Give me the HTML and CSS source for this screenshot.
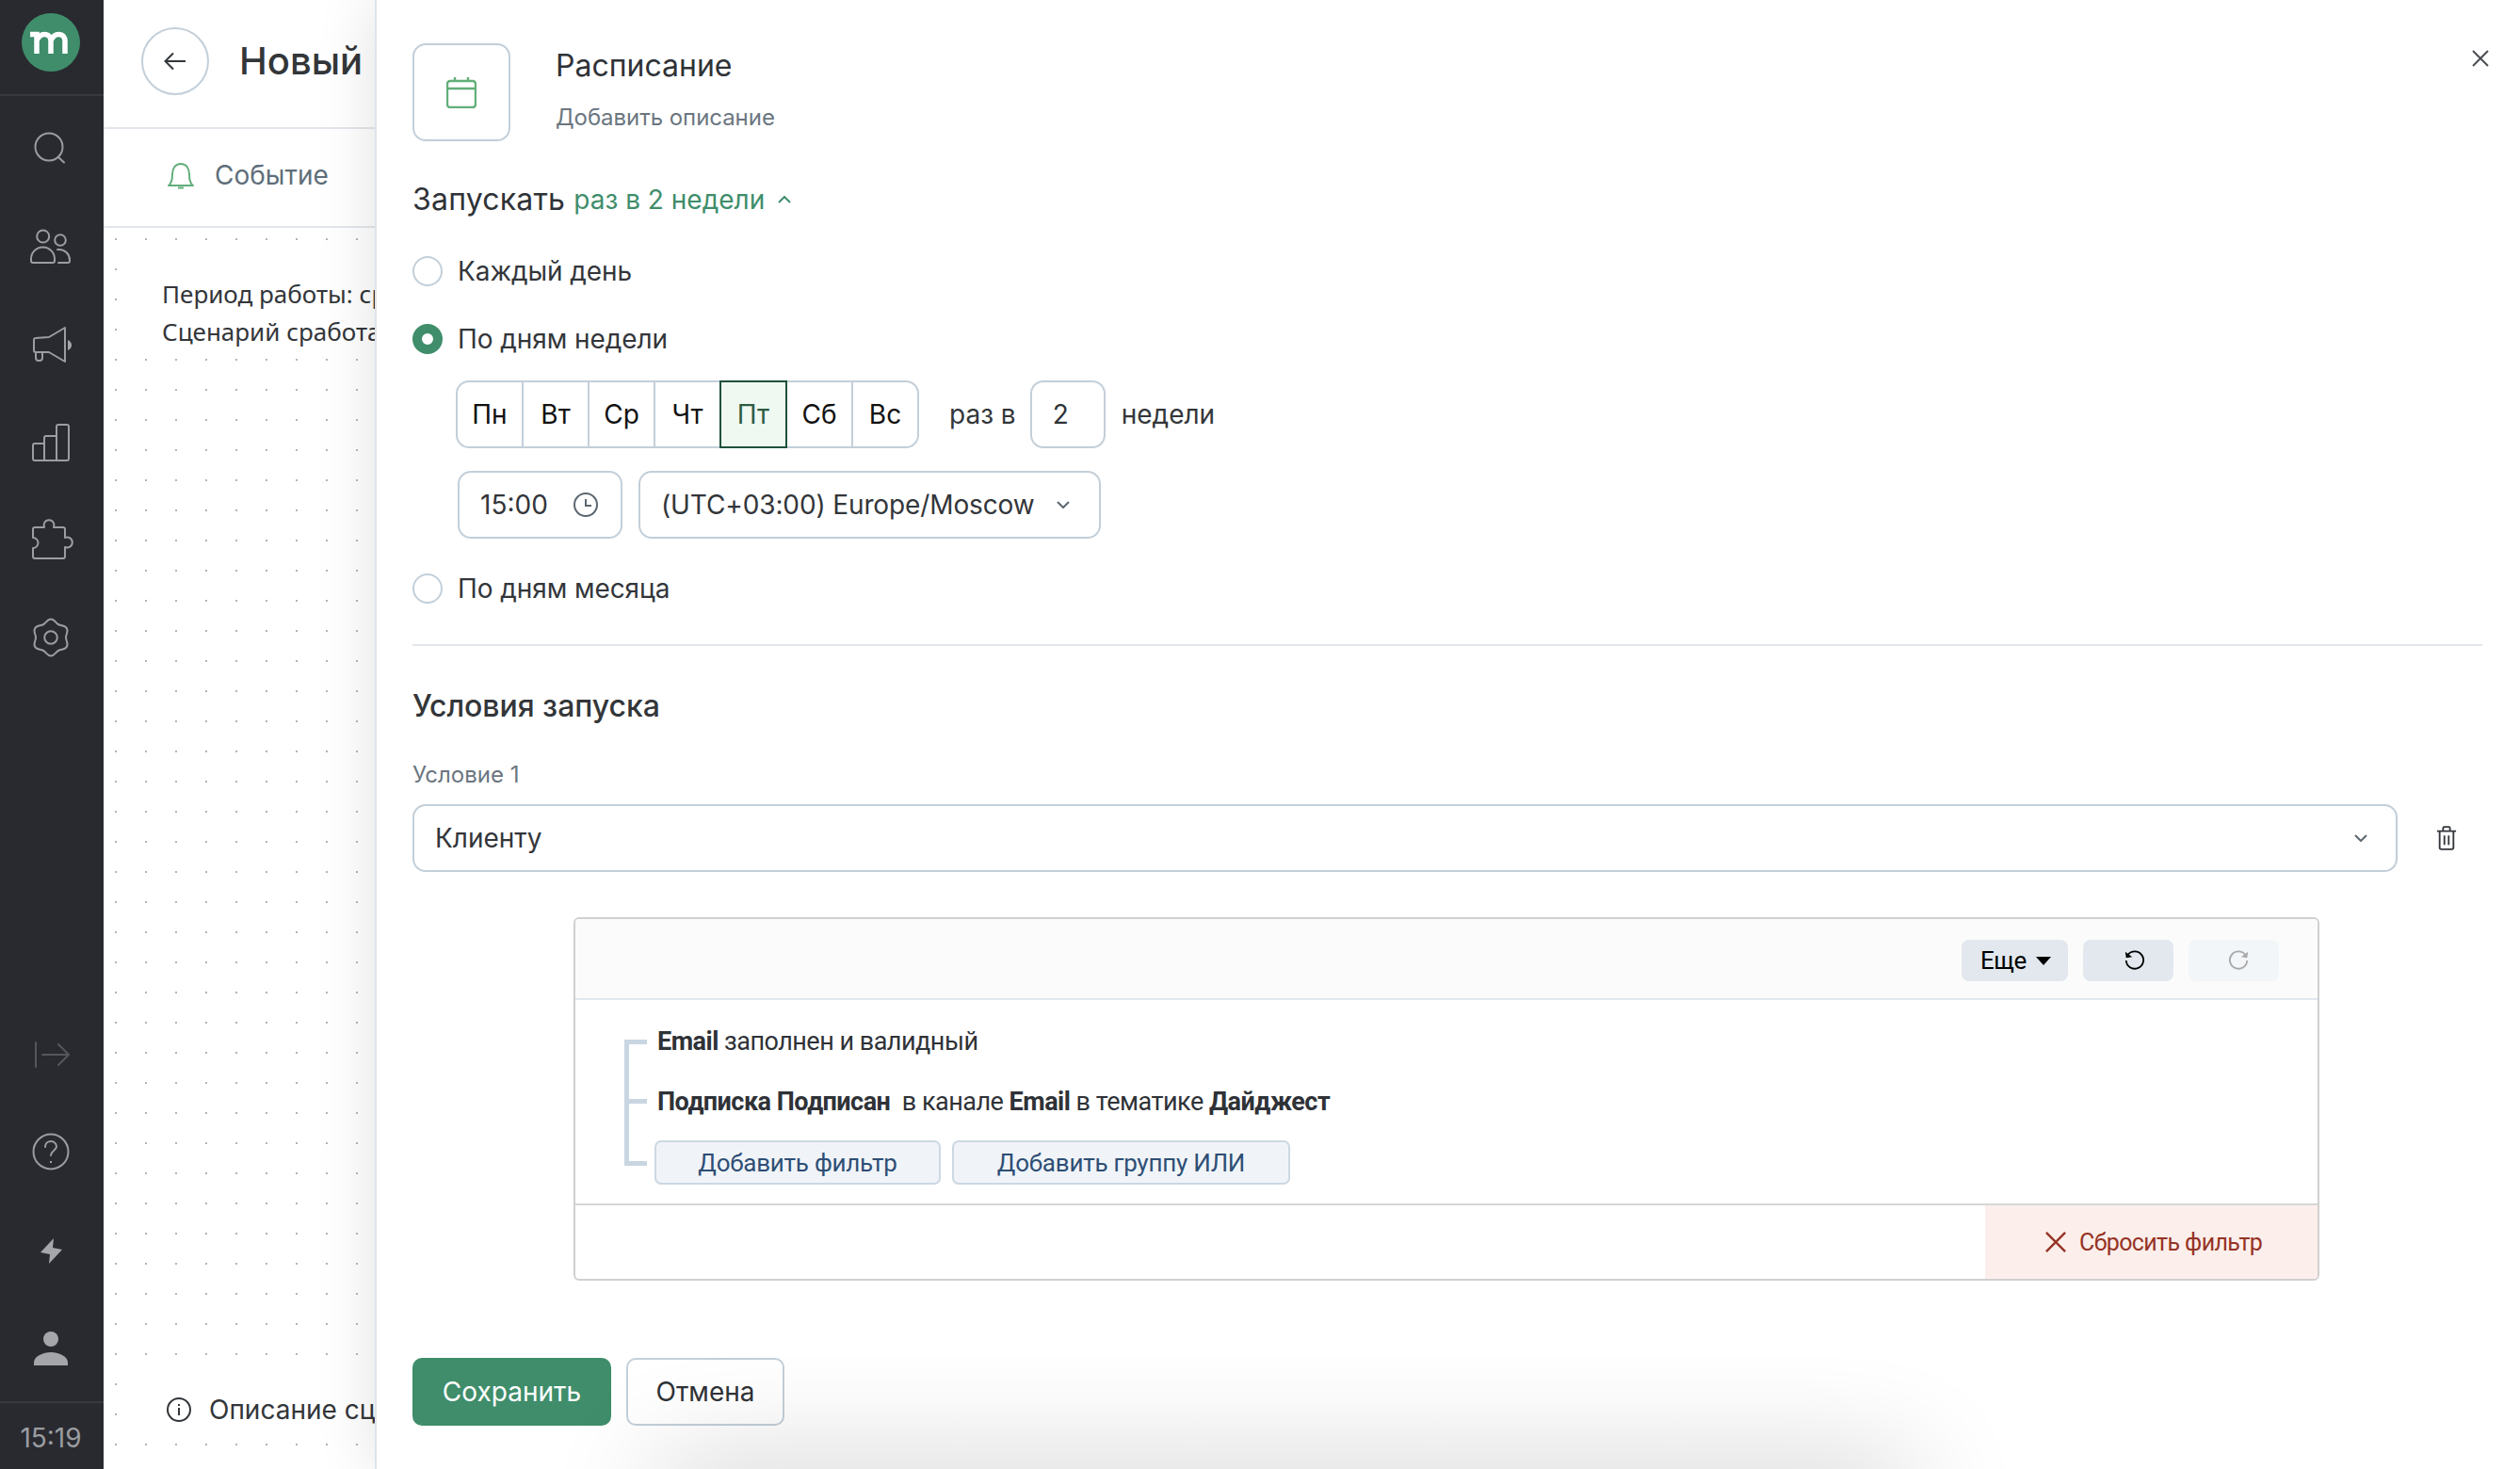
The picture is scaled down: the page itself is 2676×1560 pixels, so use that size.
FILE: index.html
```html
<!DOCTYPE html>
<html lang="ru">
<head>
<meta charset="utf-8">
<title>Расписание</title>
<link rel="stylesheet" href="styles.css">
</head>
<body>
<aside class="sidebar">
  <div class="logo-row">
    <svg class="logo" viewBox="23 14 62 62"><circle cx="54" cy="45" r="31" fill="#3f8d6b"/><path d="M32 36.500h7v20.500M39 43c2-4 5-6.500 8-6.500 5 0 7 3 7 7v13.500M54 43c2-4 5-6.500 8-6.500 5 0 7 3 7 7v13.500" fill="none" stroke="#fff" stroke-width="5.500"/></svg>
  </div>
  <nav class="nav">
    <div class="nav-item"><svg class="nav-icon" viewBox="26 129 56 56"><circle cx="52" cy="156" r="14.5"/><path d="M62 167l6 5.500"/></svg></div>
    <div class="nav-item"><svg class="nav-icon" viewBox="26 233 56 56"><circle cx="45.700" cy="251" r="6.500"/><circle cx="64" cy="255" r="5.800"/><path d="M35 279h21a2 2 0 0 0 2-2v-2a12.500 12.500 0 0 0-25 0v2a2 2 0 0 0 2 2zM61 265h2a11 11 0 0 1 11 11v1a2 2 0 0 1-2 2H62"/></svg></div>
    <div class="nav-item"><svg class="nav-icon" viewBox="26 337 56 56"><path d="M36 361a2 2 0 0 1 2-2l14-1 17-10v36l-17-10H38a2 2 0 0 1-2-2zM38 374v6a3 3 0 0 0 3 3h1a3 3 0 0 0 3-3v-6"/><path class="solid" d="M72 361q4 2 4 5.500t-4 5.500z"/></svg></div>
    <div class="nav-item"><svg class="nav-icon" viewBox="26 441 56 56"><path d="M47 471h-10a2 2 0 0 0-2 2v14a2 2 0 0 0 2 2h34a2 2 0 0 0 2-2v-34a2 2 0 0 0-2-2h-9a2 2 0 0 0-2 2v36M47 489v-24a2 2 0 0 1 2-2h11"/></svg></div>
    <div class="nav-item"><svg class="nav-icon" viewBox="26 545 56 56"><path d="M37 560h10a5.500 5.500 0 1 1 10 0h10a2 2 0 0 1 2 2v9a5.500 5.500 0 1 1 0 10v10a2 2 0 0 1-2 2H37a2 2 0 0 1-2-2v-9a5.500 5.500 0 1 0 0-11v-9a2 2 0 0 1 2-2z"/></svg></div>
    <div class="nav-item"><svg class="nav-icon" viewBox="-28 -28 56 56"><g><path d="M-8-13.860C-5-15.600-4-19.500 0-19.500S5-15.600 8-13.860"/><path transform="rotate(60)" d="M-8-13.860C-5-15.600-4-19.500 0-19.500S5-15.600 8-13.860"/><path transform="rotate(120)" d="M-8-13.860C-5-15.600-4-19.500 0-19.500S5-15.600 8-13.860"/><path transform="rotate(180)" d="M-8-13.860C-5-15.600-4-19.500 0-19.500S5-15.600 8-13.860"/><path transform="rotate(240)" d="M-8-13.860C-5-15.600-4-19.500 0-19.500S5-15.600 8-13.860"/><path transform="rotate(300)" d="M-8-13.860C-5-15.600-4-19.500 0-19.500S5-15.600 8-13.860"/></g><circle r="6.800"/></svg></div>
  </nav>
  <nav class="nav nav-bottom">
    <div class="nav-item"><svg class="nav-icon nav-icon-dim" viewBox="26 1091 56 56"><path d="M38 1107v26M45 1120h28M62 1109l11 11-11 11"/></svg></div>
    <div class="nav-item"><svg class="nav-icon" viewBox="26 1195 56 56"><circle cx="54" cy="1223" r="18.500"/><path d="M48 1218c0-4 3-6 6-6 4 0 6 3 6 5.500 0 4-6 4.500-6 9.500"/><path class="solid" d="M53 1233h2v2h-2z"/></svg></div>
    <div class="nav-item"><svg class="nav-icon" viewBox="26 1299 56 56"><path class="solid" d="M57 1315l-14 15 10 2-1 10 14-15-10-2z"/></svg></div>
    <div class="nav-item"><svg class="nav-icon" viewBox="26 1403 56 56"><circle class="solid" cx="54" cy="1422" r="8"/><path class="solid" d="M36 1450v-3c0-7 10-11 18-11s18 4 18 11v3z"/></svg></div>
  </nav>
  <div class="clock">15:19</div>
</aside>

<section class="canvas">
  <header class="canvas-head">
    <span class="back"><svg class="back-icon" viewBox="0 0 24 24"><path d="M23 12H2M10 3.500 1.500 12l8.500 8.500"/></svg></span>
    <h1 class="canvas-title">Новый сценарий</h1>
  </header>
  <div class="canvas-event">
    <svg class="bell" viewBox="0 0 28 30"><path d="M1 26h26c-3-2-4-6-4-12 0-6-3-11-9-11S5 8 5 14c0 6-1 10-4 12zM11 28.500h6"/></svg>
    <span>Событие</span>
  </div>
  <div class="canvas-body">
    <div class="period">
      <p class="period-line">Период работы: среда</p>
      <p class="period-line">Сценарий сработает</p>
    </div>
    <div class="describe">
      <svg class="info" viewBox="0 0 26 26"><circle cx="13" cy="13" r="12"/><path d="M13 11v8M13 7v2"/></svg>
      <span>Описание сценария</span>
    </div>
  </div>
</section>

<main class="drawer">
  <svg class="close" viewBox="0 0 18 18"><path d="M1 1l16 16M17 1 1 17"/></svg>
  <div class="head">
    <div class="head-icon"><svg class="calendar" viewBox="0 0 32 34"><rect x="1" y="5" width="30" height="28" rx="3"/><path d="M1 13h30M9 1v4M23 1v4"/></svg></div>
    <div class="head-text">
      <div class="head-title">Расписание</div>
      <div class="head-sub">Добавить описание</div>
    </div>
  </div>

  <div class="run"><span class="run-label">Запускать </span><span class="run-value">раз в 2 недели</span><svg class="chev-up" viewBox="0 0 14 8"><path d="M1 7l6-6 6 6"/></svg></div>

  <label class="radio radio-first"><span class="dot"></span>Каждый день</label>
  <label class="radio radio-next"><span class="dot dot-on"></span>По дням недели</label>

  <div class="days-row">
    <div class="days">
      <span class="day">Пн</span><span class="day">Вт</span><span class="day">Ср</span><span class="day">Чт</span><span class="day day-on">Пт</span><span class="day">Сб</span><span class="day">Вс</span>
    </div>
    <span class="muted-text every">раз в</span>
    <span class="num">2</span>
    <span class="muted-text weeks">недели</span>
  </div>

  <div class="time-row">
    <div class="field time">15:00<svg class="clock-icon" viewBox="0 0 26 26"><circle cx="13" cy="13" r="12"/><path d="M13 7v7h6"/></svg></div>
    <div class="field zone">(UTC+03:00) Europe/Moscow<svg class="chev" viewBox="0 0 14 8"><path d="M1 1l6 6 6-6"/></svg></div>
  </div>

  <label class="radio radio-last"><span class="dot"></span>По дням месяца</label>

  <hr class="rule">

  <h2 class="cond-title">Условия запуска</h2>
  <div class="cond-label">Условие 1</div>
  <div class="cond-row">
    <div class="field cond-select">Клиенту<svg class="chev" viewBox="0 0 14 8"><path d="M1 1l6 6 6-6"/></svg></div>
    <svg class="trash" viewBox="0 0 24 28"><path d="M1 6h22M8 6V2.500a1.500 1.500 0 0 1 1.500-1.500h5A1.500 1.500 0 0 1 16 2.500V6M4 6v19a2 2 0 0 0 2 2h12a2 2 0 0 0 2-2V6M9.500 11v11M14.500 11v11"/></svg>
  </div>

  <div class="builder">
    <div class="builder-bar">
      <span class="tool tool-more">Еще<i class="caret"></i></span>
      <span class="tool tool-icon"><svg class="hist" viewBox="0 0 24 24"><path d="M5 5.500A10 10 0 1 1 3 12"/><path class="hist-head" d="M2 2l1 7 7-1z"/></svg></span>
      <span class="tool tool-icon tool-off"><svg class="hist hist-off" viewBox="0 0 24 24"><path d="M19 5.500A10 10 0 1 0 21 12"/><path class="hist-head" d="M22 2l-1 7-7-1z"/></svg></span>
    </div>
    <div class="builder-body">
      <div class="tree-row"><b>Email</b> заполнен и валидный</div>
      <div class="tree-row"><b>Подписка Подписан</b>&nbsp; в канале <b>Email</b> в тематике <b>Дайджест</b></div>
      <div class="tree-actions">
        <span class="add add-filter">Добавить фильтр</span>
        <span class="add add-group">Добавить группу ИЛИ</span>
      </div>
    </div>
    <div class="builder-foot">
      <span class="reset"><svg class="reset-x" viewBox="0 0 24 24"><path d="M1 1l22 22M23 1 1 23"/></svg>Сбросить фильтр</span>
    </div>
  </div>

  <div class="actions">
    <button class="btn btn-save">Сохранить</button>
    <button class="btn btn-cancel">Отмена</button>
  </div>
  <div class="toast-shadow"></div>
</main>
</body>
</html>
```

FILE: styles.css
```css
* { box-sizing: border-box; }
html, body { margin: 0; padding: 0; height: 100%; }
body {
  display: flex;
  width: 2676px;
  height: 1560px;
  overflow: hidden;
  background: #fff;
  color: #2f3237;
  font-family: Inter, "Noto Sans", sans-serif;
  font-size: 28px;
}

/* Sidebar */
.sidebar {
  flex: 0 0 110px;
  display: flex;
  flex-direction: column;
  background: #292a30;
  position: relative;
  z-index: 3;
}
.logo-row { height: 102px; flex: none; padding: 14px 0 0 23px; border-bottom: 2px solid #38393f; }
.logo { display: block; width: 62px; height: 62px; }
.nav { display: flex; flex-direction: column; padding-top: 3px; }
.nav-bottom { margin-top: auto; padding-top: 0; padding-bottom: 5px; }
.nav-item { height: 104px; display: flex; align-items: center; justify-content: center; padding-right: 2px; }
.nav-icon { width: 56px; height: 56px; fill: none; stroke: #9b9da0; stroke-width: 2; stroke-linecap: round; stroke-linejoin: round; }
.nav-icon .solid { fill: #a4a6a9; stroke: none; }
.nav-icon-dim { stroke: #55565a; }
.clock {
  height: 72px;
  flex: none;
  border-top: 2px solid #38393f;
  display: flex;
  align-items: center;
  justify-content: center;
  color: #9b9da0;
  font-size: 28px;
  padding-top: 3px;
  padding-right: 2px;
}

/* Canvas */
.canvas {
  flex: 0 0 288px;
  display: flex;
  flex-direction: column;
  overflow: hidden;
  background: #fff;
}
.canvas-head {
  height: 137px;
  flex: none;
  display: flex;
  align-items: center;
  gap: 32px;
  padding: 0 0 6px 40px;
  border-bottom: 2px solid #e1e7ec;
  white-space: nowrap;
}
.back {
  flex: none;
  width: 72px;
  height: 72px;
  border: 2px solid #c3cfd9;
  border-radius: 50%;
  display: flex;
  align-items: center;
  justify-content: center;
}
.back-icon { width: 24px; height: 24px; fill: none; stroke: #33363a; stroke-width: 2; }
.canvas-title { margin: 0; font-size: 40px; font-weight: 500; color: #333639; word-spacing: 5px; }
.canvas-event {
  height: 105px;
  flex: none;
  display: flex;
  align-items: center;
  gap: 22px;
  padding: 0 0 6px 68px;
  border-bottom: 2px solid #e1e7ec;
  color: #5f6e7a;
  font-size: 28px;
}
.bell { width: 28px; height: 30px; fill: none; stroke: #62ae7a; stroke-width: 2; stroke-linejoin: round; }
.canvas-body {
  flex: 1;
  display: flex;
  flex-direction: column;
  background-color: #fff;
  background-image: radial-gradient(circle, #b4b4b4 1px, transparent 1.4px);
  background-size: 32px 32px;
  background-position: -3px -4px;
}
.period {
  margin: 28px 0 0 26px;
  padding: 22px 0 0 36px;
  background: #fff;
  height: 110px;
  white-space: nowrap;
}
.period-line { margin: 0; font-family: "Noto Sans", sans-serif; font-size: 26px; line-height: 40px; color: #33363a; }
.describe {
  margin: auto 0 40px 26px;
  height: 64px;
  padding: 18px 0 0 41px;
  display: flex;
  align-items: center;
  gap: 19px;
  background: #fff;
  white-space: nowrap;
  font-size: 28px;
  color: #33363a;
}
.info { flex: none; width: 26px; height: 26px; fill: none; stroke: #33363a; stroke-width: 2; }

/* Drawer */
.drawer {
  flex: 1;
  position: relative;
  z-index: 2;
  padding: 46px 40px 0 38px;
  background: #fff;
  border-left: 2px solid #dde4ea;
  box-shadow: 0 0 60px rgba(0, 0, 0, .12);
  overflow: visible;
}
.close { position: absolute; top: 53px; right: 33px; width: 18px; height: 18px; fill: none; stroke: #4a4d52; stroke-width: 2; }
.head { display: flex; gap: 48px; height: 104px; }
.head-icon {
  flex: none;
  width: 104px;
  height: 104px;
  border: 2px solid #c3cfd9;
  border-radius: 14px;
  display: flex;
  align-items: center;
  justify-content: center;
}
.calendar { width: 32px; height: 34px; fill: none; stroke: #62ae7a; stroke-width: 2.4; }
.head-title { font-size: 32px; line-height: 40px; margin-top: 4px; color: #2f3237; }
.head-sub { font-size: 24px; line-height: 30px; margin-top: 20px; color: #6b7680; letter-spacing: -.05px; }
.run { margin-top: 42px; height: 40px; line-height: 40px; display: flex; align-items: center; white-space: pre; }
.run-label { font-size: 32px; letter-spacing: .2px; }
.run-value { color: #3f8d6b; font-size: 28px; }
.chev-up { width: 14px; height: 8px; margin-left: 14px; fill: none; stroke: #3f8d6b; stroke-width: 2; }
.radio { display: flex; align-items: center; gap: 16px; height: 32px; font-size: 28px; color: #33363a; letter-spacing: -.08px; }
.radio-first { margin-top: 40px; }
.radio-next { margin-top: 40px; }
.radio-last { margin-top: 37px; }
.dot { width: 32px; height: 32px; border: 2px solid #c3cfd9; border-radius: 50%; background: #fff; flex: none; }
.dot-on { border: 10px solid #3f8d6b; }
.days-row { display: flex; align-items: center; margin: 28px 0 0 46px; height: 72px; }
.days { display: flex; height: 72px; width: 492px; border: 2px solid #c3cfd9; border-radius: 14px; }
.day {
  flex: none;
  width: 70px;
  display: flex;
  align-items: center;
  justify-content: center;
  color: #111;
  font-size: 28px;
  border-left: 2px solid #c3cfd9;
}
.day:first-child { border-left: 0; width: 68px; }
.day-on { width: 72px; margin: -2px 0; background: #eff8f1; border: 2px solid #1f5239; color: #2d5c45; }
.day-on + .day { width: 68px; border-left: 0; }
.muted-text { color: #33363a; font-size: 28px; }
.every { margin-left: 32px; }
.num {
  margin-left: 15px;
  width: 80px;
  height: 72px;
  border: 2px solid #c3cfd9;
  border-radius: 14px;
  display: flex;
  align-items: center;
  padding-left: 22px;
  font-size: 28px;
  color: #2f3237;
}
.weeks { margin-left: 17px; }
.time-row { display: flex; gap: 17px; margin: 24px 0 0 48px; }
.field {
  display: flex;
  align-items: center;
  justify-content: space-between;
  height: 72px;
  border: 2px solid #c3cfd9;
  border-radius: 14px;
  background: #fff;
  font-size: 28px;
  color: #33363a;
}
.time { width: 175px; padding: 0 24px 0 22px; }
.clock-icon { width: 26px; height: 26px; fill: none; stroke: #5c6770; stroke-width: 2; }
.zone { width: 491px; padding: 0 31px 0 22px; white-space: nowrap; letter-spacing: -.12px; }
.chev { width: 14px; height: 8px; fill: none; stroke: #5c6770; stroke-width: 2; }
.rule { margin: 43px 0 0; border: 0; border-top: 2px solid #e1e7ec; }
.cond-title { margin: 44px 0 0; font-size: 32px; line-height: 40px; font-weight: 500; color: #333639; letter-spacing: -.05px; }
.cond-label { margin-top: 38px; font-size: 24px; line-height: 30px; color: #6b7680; }
.cond-row { display: flex; align-items: center; margin-top: 16px; }
.cond-select { width: 2108px; padding: 0 30px 0 22px; }
.trash { margin-left: 41px; width: 22px; height: 26px; fill: none; stroke: #33363a; stroke-width: 2; }

/* Filter builder */
.builder {
  margin: 48px 0 0 171px;
  width: 1854px;
  height: 386px;
  display: flex;
  flex-direction: column;
  border: 2px solid #d0d0d0;
  border-radius: 6px;
  overflow: hidden;
  font-family: Roboto, "Noto Sans", sans-serif;
  font-size: 27px;
}
.builder-bar {
  height: 86px;
  flex: none;
  display: flex;
  justify-content: flex-end;
  align-items: flex-start;
  gap: 16px;
  padding: 22px 41px 0 0;
  background: #fbfbfb;
  border-bottom: 2px solid #e2e8ee;
}
.tool {
  height: 44px;
  display: flex;
  align-items: center;
  justify-content: center;
  background: #e2e8ee;
  border-radius: 8px;
  color: #000;
  font-size: 26px;
  letter-spacing: -.4px;
}
.tool-more { width: 113px; gap: 10px; padding-left: 2px; }
.caret { width: 0; height: 0; border: 8px solid transparent; border-top: 9px solid #000; border-bottom: 0; }
.tool-icon { width: 96px; padding-left: 12px; }
.tool-off { background: #f3f6f8; }
.hist { width: 22px; height: 22px; fill: none; stroke: #000; stroke-width: 2; }
.hist .hist-head { fill: #000; stroke: none; }
.hist-off { stroke: #a8a8a8; }
.hist-off .hist-head { fill: #a8a8a8; }
.builder-body {
  height: 218px;
  flex: none;
  padding: 0 0 0 87px;
  position: relative;
  border-bottom: 2px solid #d6d6d6;
  background-image:
    linear-gradient(#c9d6e2, #c9d6e2),
    linear-gradient(#c9d6e2, #c9d6e2),
    linear-gradient(#c9d6e2, #c9d6e2),
    linear-gradient(#c9d6e2, #c9d6e2);
  background-repeat: no-repeat;
  background-size: 5px 134px, 24px 5px, 24px 5px, 24px 5px;
  background-position: 52px 42px, 52px 42px, 52px 105px, 52px 171px;
}
.tree-row { height: 64px; display: flex; align-items: center; white-space: pre; color: #2f3237; letter-spacing: -.5px; }
.tree-row:first-child { margin-top: 12px; }
.tree-row b { font-weight: 700; }
.tree-actions { display: flex; gap: 12px; margin: 9px 0 0 -3px; }
.add {
  height: 47px;
  display: flex;
  align-items: center;
  justify-content: center;
  background: #f0f4f8;
  border: 2px solid #ccd8e2;
  border-radius: 7px;
  color: #2e4e75;
  font-size: 26px;
  letter-spacing: -.25px;
  padding-top: 1px;
}
.add-filter { width: 304px; }
.add-group { width: 359px; }
.builder-foot { flex: 1; display: flex; justify-content: flex-end; }
.reset {
  width: 353px;
  display: flex;
  align-items: center;
  gap: 14px;
  padding-left: 64px;
  background: #fceeeb;
  color: #953324;
  font-size: 25px;
  letter-spacing: -.6px;
}
.reset-x { width: 22px; height: 22px; fill: none; stroke: #953324; stroke-width: 2.6; }

/* Actions */
.actions { display: flex; gap: 16px; margin-top: 82px; }
.btn {
  height: 72px;
  border-radius: 10px;
  font-family: Inter, "Noto Sans", sans-serif;
  font-size: 28px;
  padding: 0;
}
.btn-save { width: 211px; background: #3f8d6b; border: 0; color: #fff; }
.btn-cancel { width: 168px; background: #fff; border: 2px solid #c3cfd9; color: #2f3237; }
.toast-shadow {
  position: absolute;
  left: 300px;
  width: 1330px;
  top: 1560px;
  height: 60px;
  box-shadow: 0 0 120px rgba(0, 0, 0, .24);
}
```
